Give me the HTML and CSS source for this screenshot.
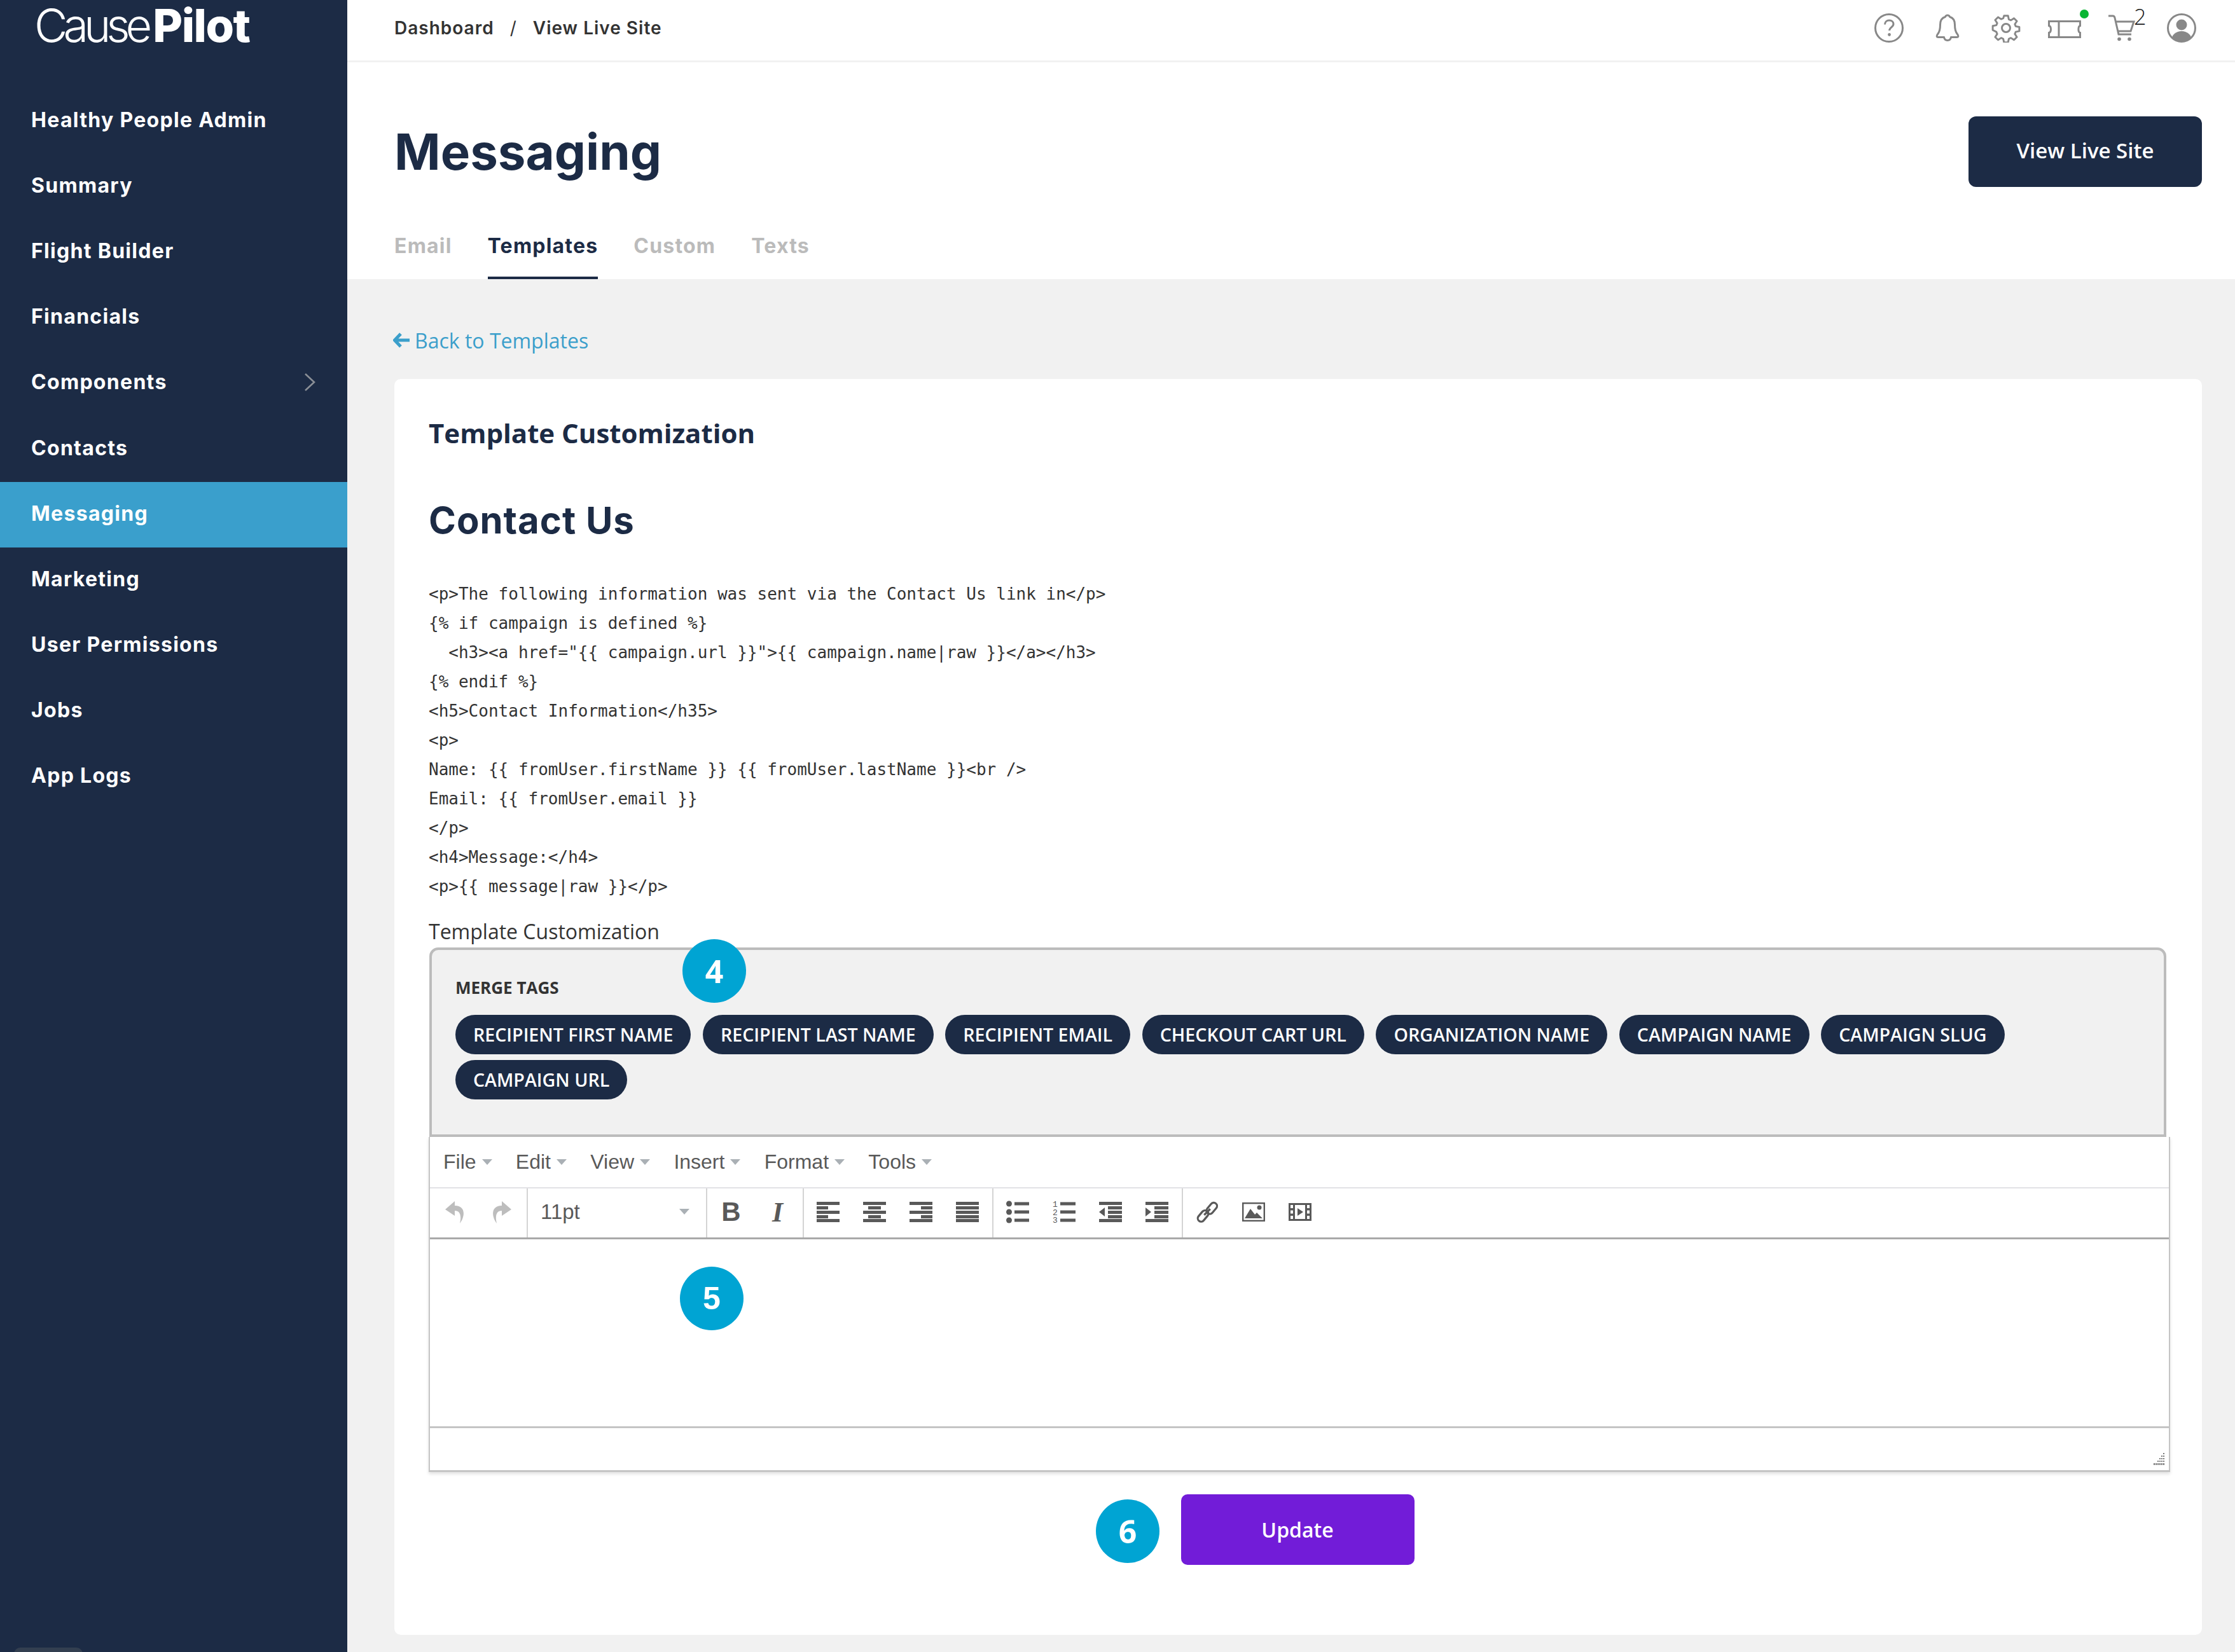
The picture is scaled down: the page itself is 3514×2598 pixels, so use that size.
FILE: index.html
```html
<!DOCTYPE html>
<html lang="en">
<head>
<meta charset="utf-8">
<title>Messaging</title>
<link rel="stylesheet" href="styles.css">
</head>
<body>
<div class="app">
  <aside class="sidebar">
    <div class="logo"><span class="logo-light">Cause</span><span class="logo-bold">Pilot</span></div>
    <nav class="nav">
      <a class="nav-item">Healthy People Admin</a>
      <a class="nav-item">Summary</a>
      <a class="nav-item">Flight Builder</a>
      <a class="nav-item">Financials</a>
      <a class="nav-item">Components
        <svg class="nav-chevron" viewBox="0 0 18 28"><path d="M2 1l14 13L2 27" fill="none" stroke="#8a8f96" stroke-width="2.6"/></svg>
      </a>
      <a class="nav-item">Contacts</a>
      <a class="nav-item is-active">Messaging</a>
      <a class="nav-item">Marketing</a>
      <a class="nav-item">User Permissions</a>
      <a class="nav-item">Jobs</a>
      <a class="nav-item">App Logs</a>
    </nav>
    <div class="side-handle"></div>
  </aside>
  <div class="main">
    <header class="topbar">
      <div class="crumbs"><span>Dashboard</span><span class="crumb-sep">/</span><span>View Live Site</span></div>
      <div class="top-icons">
        <svg class="top-icon" viewBox="0 0 46 46"><circle cx="23" cy="23" r="21.500" fill="none" stroke="#888" stroke-width="3"/><path d="M16.500 17.500c0-4 3-6.500 6.800-6.500 3.900 0 6.700 2.400 6.700 5.800 0 4.900-6.400 5.200-6.400 10.200" fill="none" stroke="#888" stroke-width="3"/><circle cx="23.500" cy="33.500" r="2.400" fill="#888"/></svg>
        <svg class="top-icon" viewBox="0 0 46 46"><path d="M23 3c2 0 3 1 3.500 2.500C32 7 34.500 12 34.500 18c0 6 .5 10 3.500 14 2.500 3 2.500 5.500-.5 5.500H28.500c-.5 3-2.500 5-5.500 5s-5-2-5.500-5H8.500c-3 0-3-2.500-.5-5.500 3-4 3.500-8 3.500-14 0-6 2.500-11 8-12.500C20 4 21 3 23 3z" fill="none" stroke="#888" stroke-width="3" stroke-linejoin="round"/></svg>
        <svg class="top-icon" viewBox="0 0 46 46"><path d="M19.500 2h7l1.300 6.200 3.600 1.500 5.300-3.500 5 5-3.500 5.300 1.500 3.600 6.200 1.300v7l-6.200 1.300-1.500 3.600 3.500 5.300-5 5-5.300-3.500-3.600 1.500-1.300 6.200h-7l-1.300-6.200-3.600-1.500-5.300 3.500-5-5 3.500-5.300-1.500-3.600L.1 26.500v-7l6.200-1.300 1.500-3.600-3.500-5.300 5-5 5.300 3.500 3.600-1.500z" transform="translate(2 2) scale(.913)" fill="none" stroke="#888" stroke-width="3.200" stroke-linejoin="round"/><circle cx="23" cy="23" r="6.500" fill="none" stroke="#888" stroke-width="3"/></svg>
        <span class="ticket-wrap">
          <svg class="ticket" viewBox="0 0 52 28"><path d="M1.500 1.500h49v7c-3.500 1-3.500 10 0 11v7h-49v-7c4-1 4-10 0-11zM17 1.500v25" fill="none" stroke="#888" stroke-width="3"/></svg>
          <span class="ticket-dot"></span>
        </span>
        <span class="cart-wrap">
          <svg class="cart" viewBox="0 0 42 42"><path d="M0 2h7c2 0 2.500 1 3 3l6 26h20M10.500 11H40l-5 15H15" fill="none" stroke="#888" stroke-width="3"/><circle cx="17" cy="38.500" r="2.800" fill="#888"/><circle cx="33" cy="38.500" r="2.800" fill="#888"/></svg>
          <span class="cart-count">2</span>
        </span>
        <svg class="top-icon" viewBox="0 0 46 46"><defs><clipPath id="u"><circle cx="23" cy="23" r="21"/></clipPath></defs><circle cx="23" cy="23" r="21.500" fill="none" stroke="#888" stroke-width="3"/><circle cx="23" cy="18" r="8.500" fill="#888"/><ellipse cx="23" cy="41" rx="15.500" ry="13" fill="#888" clip-path="url(#u)"/></svg>
      </div>
    </header>
    <section class="page-head">
      <div class="title-row">
        <h1 class="page-title">Messaging</h1>
        <a class="live-btn">View Live Site</a>
      </div>
      <div class="tabs">
        <a class="tab">Email</a>
        <a class="tab is-current">Templates</a>
        <a class="tab">Custom</a>
        <a class="tab">Texts</a>
      </div>
    </section>
    <main class="content">
      <a class="back-link"><svg class="back-arrow" viewBox="0 0 26 24"><path d="M12 2L2.500 12l9.500 10M3 12h23" fill="none" stroke="#3b9fcb" stroke-width="5"/></svg>Back to Templates</a>
      <section class="card">
        <h3 class="card-title">Template Customization</h3>
        <h2 class="template-name">Contact Us</h2>
<pre class="code">&lt;p&gt;The following information was sent via the Contact Us link in&lt;/p&gt;
{% if campaign is defined %}
  &lt;h3&gt;&lt;a href="{{ campaign.url }}"&gt;{{ campaign.name|raw }}&lt;/a&gt;&lt;/h3&gt;
{% endif %}
&lt;h5&gt;Contact Information&lt;/h35&gt;
&lt;p&gt;
Name: {{ fromUser.firstName }} {{ fromUser.lastName }}&lt;br /&gt;
Email: {{ fromUser.email }}
&lt;/p&gt;
&lt;h4&gt;Message:&lt;/h4&gt;
&lt;p&gt;{{ message|raw }}&lt;/p&gt;</pre>
        <label class="field-label">Template Customization</label>
        <div class="merge-box">
          <div class="merge-title">MERGE TAGS</div>
          <div class="chips">
            <span class="chip">RECIPIENT FIRST NAME</span>
            <span class="chip">RECIPIENT LAST NAME</span>
            <span class="chip">RECIPIENT EMAIL</span>
            <span class="chip">CHECKOUT CART URL</span>
            <span class="chip">ORGANIZATION NAME</span>
            <span class="chip">CAMPAIGN NAME</span>
            <span class="chip">CAMPAIGN SLUG</span>
            <span class="chip">CAMPAIGN URL</span>
          </div>
          <span class="step step-4">4</span>
        </div>
        <div class="editor">
          <div class="menubar">
            <span class="menu-item">File<i class="caret"></i></span>
            <span class="menu-item">Edit<i class="caret"></i></span>
            <span class="menu-item">View<i class="caret"></i></span>
            <span class="menu-item">Insert<i class="caret"></i></span>
            <span class="menu-item">Format<i class="caret"></i></span>
            <span class="menu-item">Tools<i class="caret"></i></span>
          </div>
          <div class="toolbar">
            <div class="tb-group tb-first">
              <span class="tb-btn"><svg class="ic-hist" viewBox="0 0 31 35"><path d="M15 0L0 13l15 10v-8c8 0 11 7 8 20 8-10 10-28-8-28z" fill="#bdbdbd"/></svg></span>
              <span class="tb-btn"><svg class="ic-hist" viewBox="0 0 31 35"><path d="M16 0l15 13-15 10v-8c-8 0-11 7-8 20C0 25-2 7 16 7z" fill="#bdbdbd"/></svg></span>
            </div>
            <div class="tb-group tb-size"><span>11pt</span><i class="caret caret-size"></i></div>
            <div class="tb-group">
              <span class="tb-btn tb-bold">B</span>
              <span class="tb-btn tb-italic">I</span>
            </div>
            <div class="tb-group">
              <span class="tb-btn"><svg class="ic" viewBox="0 0 36 32"><path d="M0 0h36v5H0zM0 7h18v5H0zM0 14h36v5H0zM0 21h18v5H0zM0 27h36v5H0z" fill="#595959"/></svg></span>
              <span class="tb-btn"><svg class="ic" viewBox="0 0 36 32"><path d="M0 0h36v5H0zM8 7h20v5H8zM0 14h36v5H0zM8 21h20v5H8zM0 27h36v5H0z" fill="#595959"/></svg></span>
              <span class="tb-btn"><svg class="ic" viewBox="0 0 36 32"><path d="M0 0h36v5H0zM18 7h18v5H18zM0 14h36v5H0zM18 21h18v5H18zM0 27h36v5H0z" fill="#595959"/></svg></span>
              <span class="tb-btn"><svg class="ic" viewBox="0 0 36 32"><path d="M0 0h36v5H0zM0 7h36v5H0zM0 14h36v5H0zM0 21h36v5H0zM0 27h36v5H0z" fill="#595959"/></svg></span>
            </div>
            <div class="tb-group">
              <span class="tb-btn"><svg class="ic" viewBox="0 0 36 36"><circle cx="4.500" cy="5" r="4.500" fill="#595959"/><circle cx="4.500" cy="18" r="4.500" fill="#595959"/><circle cx="4.500" cy="31" r="4.500" fill="#595959"/><path d="M13 2.500h23v5H13zM13 15.500h23v5H13zM13 28.500h23v5H13z" fill="#595959"/></svg></span>
              <span class="tb-btn"><svg class="ic" viewBox="0 0 36 36"><g class="num-digits"><text x="0" y="10">1</text><text x="0" y="23">2</text><text x="0" y="35">3</text></g><path d="M12 2.500h24v5H12zM12 15.500h24v5H12zM12 28.500h24v5H12z" fill="#595959"/></svg></span>
              <span class="tb-btn"><svg class="ic" viewBox="0 0 36 32"><path d="M0 0h36v5H0zM14 7h22v5H14zM14 14h22v5H14zM14 21h22v5H14zM0 27h36v5H0zM9 9v14L0 16z" fill="#595959"/></svg></span>
              <span class="tb-btn"><svg class="ic" viewBox="0 0 36 32"><path d="M0 0h36v5H0zM14 7h22v5H14zM14 14h22v5H14zM14 21h22v5H14zM0 27h36v5H0zM0 9v14l9-7z" fill="#595959"/></svg></span>
            </div>
            <div class="tb-group">
              <span class="tb-btn"><svg class="ic" viewBox="0 0 38 36"><g fill="none" stroke="#595959" stroke-width="3.400"><rect x="21" y="0" width="11" height="21" rx="5.500" transform="rotate(40 26.500 10.500) translate(1 1)"/><rect x="6" y="15" width="11" height="21" rx="5.500" transform="rotate(40 11.500 25.500) translate(0 -1)"/><path d="M14 23l10-10"/></g></svg></span>
              <span class="tb-btn"><svg class="ic" viewBox="0 0 36 30"><rect x="1.200" y="1.200" width="33.600" height="27.600" fill="none" stroke="#595959" stroke-width="2.400"/><path d="M4 25l9-15 7 9 3-3 9 9z" fill="#595959"/><circle cx="27" cy="8" r="3.500" fill="#595959"/></svg></span>
              <span class="tb-btn"><svg class="ic" viewBox="0 0 36 28"><path d="M0 0h36v28H0zM3 3v5h4V3zM3 11.500v5h4v-5zM3 20v5h4v-5zM29 3v5h4V3zM29 11.500v5h4v-5zM29 20v5h4v-5zM10 3v22h16V3z" fill="#595959" fill-rule="evenodd"/><path d="M14 8l9 6-9 6z" fill="#595959"/></svg></span>
            </div>
          </div>
          <div class="edit-area"><span class="step step-5">5</span></div>
          <div class="statusbar">
            <svg class="grip" viewBox="0 0 18 22"><path d="M15 1h2v2h-2zM15 5h2v2h-2zM12 5h2v2h-2zM15 9h2v2h-2zM12 9h2v2h-2zM9 9h2v2H9zM15 13h2v2h-2zM12 13h2v2h-2zM9 13h2v2H9zM6 13h2v2H6zM15 17h2v3h-2zM12 17h2v3h-2zM9 17h2v3H9zM6 17h2v3H6zM3 17h2v3H3zM0 17h2v3H0z" fill="#777"/></svg>
          </div>
        </div>
        <div class="actions">
          <span class="step step-6">6</span>
          <a class="update-btn">Update</a>
        </div>
      </section>
    </main>
  </div>
</div>
</body>
</html>
```
FILE: styles.css
```css
* { box-sizing: border-box; }
html, body { margin: 0; padding: 0; }
body { width: 3514px; height: 2598px; overflow: hidden; background: #f1f1f1; font-family: "Open Sans", sans-serif; color: #333; }
.app { display: grid; grid-template-columns: 546px 1fr; height: 2598px; }

/* sidebar */
.sidebar { position: relative; background: #1c2b45; color: #fff; overflow: hidden; }
.logo { height: 139px; padding: 0 0 0 54px; font-family: "Inter", sans-serif; font-size: 72px; line-height: 80px; color: #fff; white-space: nowrap; }
.logo-light { font-weight: 300; letter-spacing: -7px; margin-right: 8px; }
.logo-bold { font-weight: 800; letter-spacing: -1.500px; }
.nav { display: flex; flex-direction: column; }
.nav-item { display: flex; align-items: center; justify-content: space-between; height: 103.100px; padding: 0 50px 4px 49px; font-family: "Inter", sans-serif; font-weight: 700; font-size: 32px; letter-spacing: 1.300px; color: #fff; white-space: nowrap; }
.nav-item.is-active { background: #3a9fcc; }
.nav-chevron { width: 18px; height: 28px; }
.side-handle { position: absolute; left: 22px; bottom: -20px; width: 108px; height: 28px; border-radius: 10px; background: #333f50; }

/* top bar */
.main { display: flex; flex-direction: column; min-width: 0; }
.topbar { display: flex; align-items: center; justify-content: space-between; height: 98px; padding: 0 61px 8px 74px; background: #fff; border-bottom: 3px solid #f1f1f1; }
.crumbs { display: flex; gap: 25px; font-family: "Inter", sans-serif; font-weight: 600; font-size: 28px; letter-spacing: 1px; color: #333; }
.crumb-sep { font-weight: 400; }
.top-icons { display: flex; align-items: center; gap: 46px; }
.top-icon { width: 46px; height: 46px; display: block; }
.ticket-wrap { position: relative; display: block; width: 46px; height: 46px; }
.ticket { position: absolute; left: -3px; top: 11px; width: 52px; height: 28px; }
.ticket-dot { position: absolute; left: 47px; top: -6px; width: 14px; height: 14px; border-radius: 50%; background: #0ab634; }
.cart-wrap { position: relative; display: block; width: 46px; height: 46px; }
.cart { position: absolute; left: 0; top: 2px; width: 42px; height: 42px; }
.cart-count { position: absolute; left: 40px; top: -17px; font-size: 34px; font-weight: 300; line-height: 44px; color: #222; }

/* page head */
.page-head { background: #fff; padding: 85px 52px 0 74px; height: 341px; }
.title-row { display: flex; align-items: center; justify-content: space-between; height: 111px; }
.page-title { margin: 0; font-family: "Inter", sans-serif; font-weight: 700; font-size: 78px; line-height: 90px; color: #1c2b45; }
.live-btn { display: flex; align-items: center; justify-content: center; width: 367px; height: 111px; padding-bottom: 4px; border-radius: 12px; background: #1c2b45; color: #fff; font-weight: 600; font-size: 33px; }
.tabs { display: flex; gap: 56px; margin-top: 70px; }
.tab { height: 75px; line-height: 45px; font-family: "Inter", sans-serif; font-weight: 700; font-size: 32px; letter-spacing: 1.200px; color: #bbb; }
.tab.is-current { color: #1c2b45; border-bottom: 4px solid #1c2b45; }

/* content */
.content { flex: 1; padding: 74px 52px 28px 74px; }
.back-link { display: flex; align-items: center; height: 44px; margin-left: -2px; font-size: 32px; color: #3b9fcb; }
.back-arrow { width: 26px; height: 24px; margin-right: 8px; }
.card { position: relative; margin-top: 39px; padding: 55px 52px 110px 54px; background: #fff; border-radius: 10px; }
.card-title { margin: 0; font-weight: 700; font-size: 42px; line-height: 60px; color: #1c2b45; }
.template-name { margin: 67px 0 0; font-family: "Inter", sans-serif; font-weight: 700; font-size: 58px; line-height: 80px; letter-spacing: 1px; color: #1c2b45; }
.code { margin: 53px 0 0; font-family: "DejaVu Sans Mono", monospace; font-size: 26px; line-height: 46px; color: #333; }
.field-label { display: block; margin-top: 26px; font-size: 32px; line-height: 44px; color: #333; }

/* merge tags */
.merge-box { position: relative; height: 298px; margin: 3px 4px 0 1px; padding: 41px 37px 0; background: #f1f1f1; border: 4px solid #bcbcbc; border-radius: 14px 14px 0 0; }
.merge-title { font-weight: 700; font-size: 26px; line-height: 36px; color: #333; }
.chips { display: flex; flex-wrap: wrap; gap: 9px 18.600px; margin-top: 25px; }
.chip { height: 62px; padding: 0 28px; border-radius: 31px; background: #1c2b45; color: #fff; font-weight: 600; font-size: 28.600px; line-height: 62px; white-space: nowrap; }

/* step markers */
.step { position: absolute; display: flex; align-items: center; justify-content: center; width: 100px; height: 100px; border-radius: 50%; background: #00a4d3; color: #fff; font-weight: 700; font-size: 50px; }
.step-4 { left: 394px; top: -17px; }
.step-5 { left: 393px; top: 43px; }
.step-6 { left: 1049px; top: 8px; }

/* editor */
.editor { height: 527px; margin-right: -2px; display: flex; flex-direction: column; background: #fff; border-left: 2px solid #c5c5c5; border-right: 2px solid #c5c5c5; border-bottom: 3px solid #c5c5c5; box-shadow: 0 3px 5px rgba(0,0,0,.12); font-family: "Liberation Sans", sans-serif; color: #595959; }
.menubar { display: flex; align-items: center; gap: 37.300px; height: 81px; padding-left: 21px; border-bottom: 2px solid #e2e2e6; font-size: 32px; }
.menu-item { display: flex; align-items: center; }
.caret { display: block; width: 0; height: 0; margin-left: 9px; border: 8px solid transparent; border-top: 9px solid #aab0b5; border-bottom: 0; }
.toolbar { display: flex; height: 80px; padding-bottom: 4px; border-bottom: 3px solid #a9a9a9; }
.tb-group { display: flex; align-items: center; padding: 0 3px 0 1px; margin-bottom: -4px; border-left: 2px solid #d4d4d4; }
.tb-first { padding-left: 3px; border-left: 0; }
.tb-size { justify-content: space-between; width: 282px; padding: 0 26px 4px 20px; font-size: 33px; }
.caret-size { margin: 0; }
.tb-btn { display: flex; align-items: center; justify-content: center; width: 73px; height: 44px; margin-bottom: 3px; }
.ic { display: block; width: 36px; height: 36px; }
.ic-hist { display: block; width: 31px; height: 35px; }
.tb-bold { font-weight: 700; font-size: 42px; }
.tb-italic { font-style: italic; font-family: "Liberation Serif", serif; font-size: 44px; font-weight: 700; }
.num-digits text { font-family: "Liberation Mono", monospace; font-size: 13px; fill: #595959; }
.edit-area { position: relative; flex: 1; border-bottom: 3px solid #c5c5c5; }
.statusbar { position: relative; display: flex; justify-content: flex-end; align-items: flex-end; height: 66px; padding: 0 6px 6px 0; }
.grip { width: 18px; height: 22px; }

/* actions */
.actions { position: relative; display: flex; justify-content: center; margin-top: 35px; padding-right: 4px; }
.update-btn { display: flex; align-items: center; justify-content: center; width: 367px; height: 111px; border-radius: 10px; background: #721cd8; color: #fff; font-weight: 600; font-size: 32px; }
```
